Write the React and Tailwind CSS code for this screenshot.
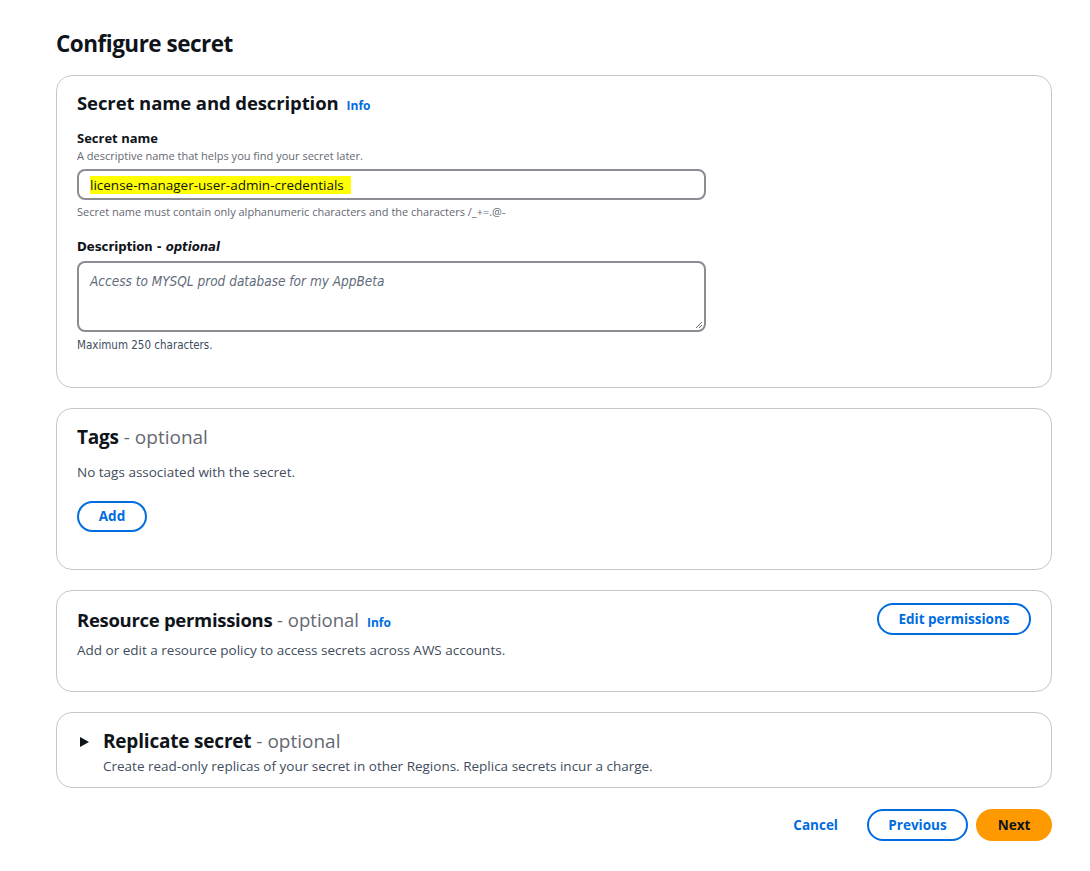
import React from "react";

const font = { fontFamily: '"Open Sans", "Noto Sans", Arial, sans-serif' };
const cond = { fontFamily: '"DejaVu Sans Condensed", "Liberation Sans Narrow", "Open Sans", sans-serif' };

function Card({ children, className = "" }) {
  return (
    <div className={"rounded-[16px] border border-[#c6c6cd] bg-white " + className}>
      {children}
    </div>
  );
}

function Info() {
  return <span className="ml-2 text-[12px] font-bold text-[#006ce0]">Info</span>;
}

export default function App() {
  return (
    <div className="min-h-[871px] w-[1090px] bg-white text-[#0f141a]" style={font}>
      <div className="pl-[56px] pr-[38px] pt-[28px]">
        <h1 className="text-[22.5px] font-bold leading-[32px] tracking-[-0.5px]">Configure secret</h1>

        <Card className="mt-[15px] h-[313px] px-[20px] pt-[14px]">
          <div className="flex items-baseline">
            <h2 className="text-[18.5px] font-bold leading-[26px] tracking-[-0.1px]">Secret name and description</h2>
            <Info />
          </div>
          <div className="mt-[12px] text-[13px] font-bold leading-[20px]">Secret name</div>
          <div className="text-[11px] leading-[16px] text-[#656871]">A descriptive name that helps you find your secret later.</div>
          <div className="mt-[5px] flex h-[31px] w-[629px] items-center rounded-[8px] border-2 border-[#8c8c94] px-[11px]">
            <span className="bg-[#ffff00] pr-[7px] text-[13.5px] leading-[18px]">license-manager-user-admin-credentials</span>
          </div>
          <div className="mt-[4px] text-[11px] leading-[16px] text-[#656871]">Secret name must contain only alphanumeric characters and the characters /_+=.@-</div>
          <div className="mt-[18px] text-[13px] font-bold leading-[18px]" style={cond}>
            Description - <span className="italic">optional</span>
          </div>
          <div className="relative mt-[5px] h-[71px] w-[629px] rounded-[8px] border-2 border-[#8c8c94] px-[11px] pt-[5px]">
            <span className="text-[13.5px] italic leading-[18px] text-[#5f6b7a]" style={cond}>Access to MYSQL prod database for my AppBeta</span>
            <svg className="absolute bottom-[1px] right-[1px]" width="8" height="8" viewBox="0 0 8 8">
              <path d="M7 1 L1 7 M7 4 L4 7" stroke="#666" strokeWidth="1" />
            </svg>
          </div>
          <div className="mt-[5px] text-[11.5px] leading-[16px] text-[#414d5c]" style={cond}>Maximum 250 characters.</div>
        </Card>

        <Card className="mt-[20px] h-[162px] px-[20px] pt-[15px]">
          <h2 className="text-[19px] leading-[26px]">
            <span className="font-bold tracking-[-0.2px]">Tags</span>
            <span className="text-[#656871]"> - optional</span>
          </h2>
          <div className="mt-[12px] text-[13.5px] leading-[20px] text-[#414d5c]">No tags associated with the secret.</div>
          <button className="mt-[19px] flex h-[31px] w-[70px] items-center justify-center rounded-full border-2 border-[#006ce0] text-[13.5px] font-bold text-[#006ce0]">Add</button>
        </Card>

        <Card className="mt-[20px] h-[102px] px-[20px] pt-[12px] pr-[20px]">
          <div className="flex items-start justify-between">
            <div className="pt-[4px]">
              <div className="flex items-baseline">
                <h2 className="text-[18.5px] leading-[26px]">
                  <span className="font-bold tracking-[-0.3px]">Resource permissions</span>
                  <span className="text-[#656871]"> - optional</span>
                </h2>
                <Info />
              </div>
              <div className="mt-[7px] text-[13.5px] leading-[20px] text-[#414d5c]">Add or edit a resource policy to access secrets across AWS accounts.</div>
            </div>
            <button className="flex h-[32px] w-[154px] items-center justify-center rounded-full border-2 border-[#006ce0] text-[13.5px] font-bold text-[#006ce0]">Edit permissions</button>
          </div>
        </Card>

        <Card className="mt-[20px] h-[76px] px-[20px] pt-[15px]">
          <div className="flex">
            <svg className="mt-[9px] mr-[14px] ml-[3px]" width="9" height="10" viewBox="0 0 9 10">
              <path d="M0 0 L9 5 L0 10 Z" fill="#0f141a" />
            </svg>
            <div>
              <h2 className="text-[19px] leading-[26px]">
                <span className="font-bold tracking-[-0.2px]">Replicate secret</span>
                <span className="text-[#656871]"> - optional</span>
              </h2>
              <div className="mt-[2px] text-[13.5px] leading-[20px] text-[#414d5c]">Create read-only replicas of your secret in other Regions. Replica secrets incur a charge.</div>
            </div>
          </div>
        </Card>

        <div className="mt-[21px] flex items-center justify-end">
          <button className="mr-[29px] text-[13.5px] font-bold text-[#006ce0]">Cancel</button>
          <button className="flex h-[32px] w-[101px] items-center justify-center rounded-full border-2 border-[#006ce0] text-[13.5px] font-bold text-[#006ce0]">Previous</button>
          <button className="ml-[8px] flex h-[32px] w-[76px] items-center justify-center rounded-full bg-[#ff9900] text-[13.5px] font-bold text-[#0f141a]">Next</button>
        </div>
      </div>
    </div>
  );
}
